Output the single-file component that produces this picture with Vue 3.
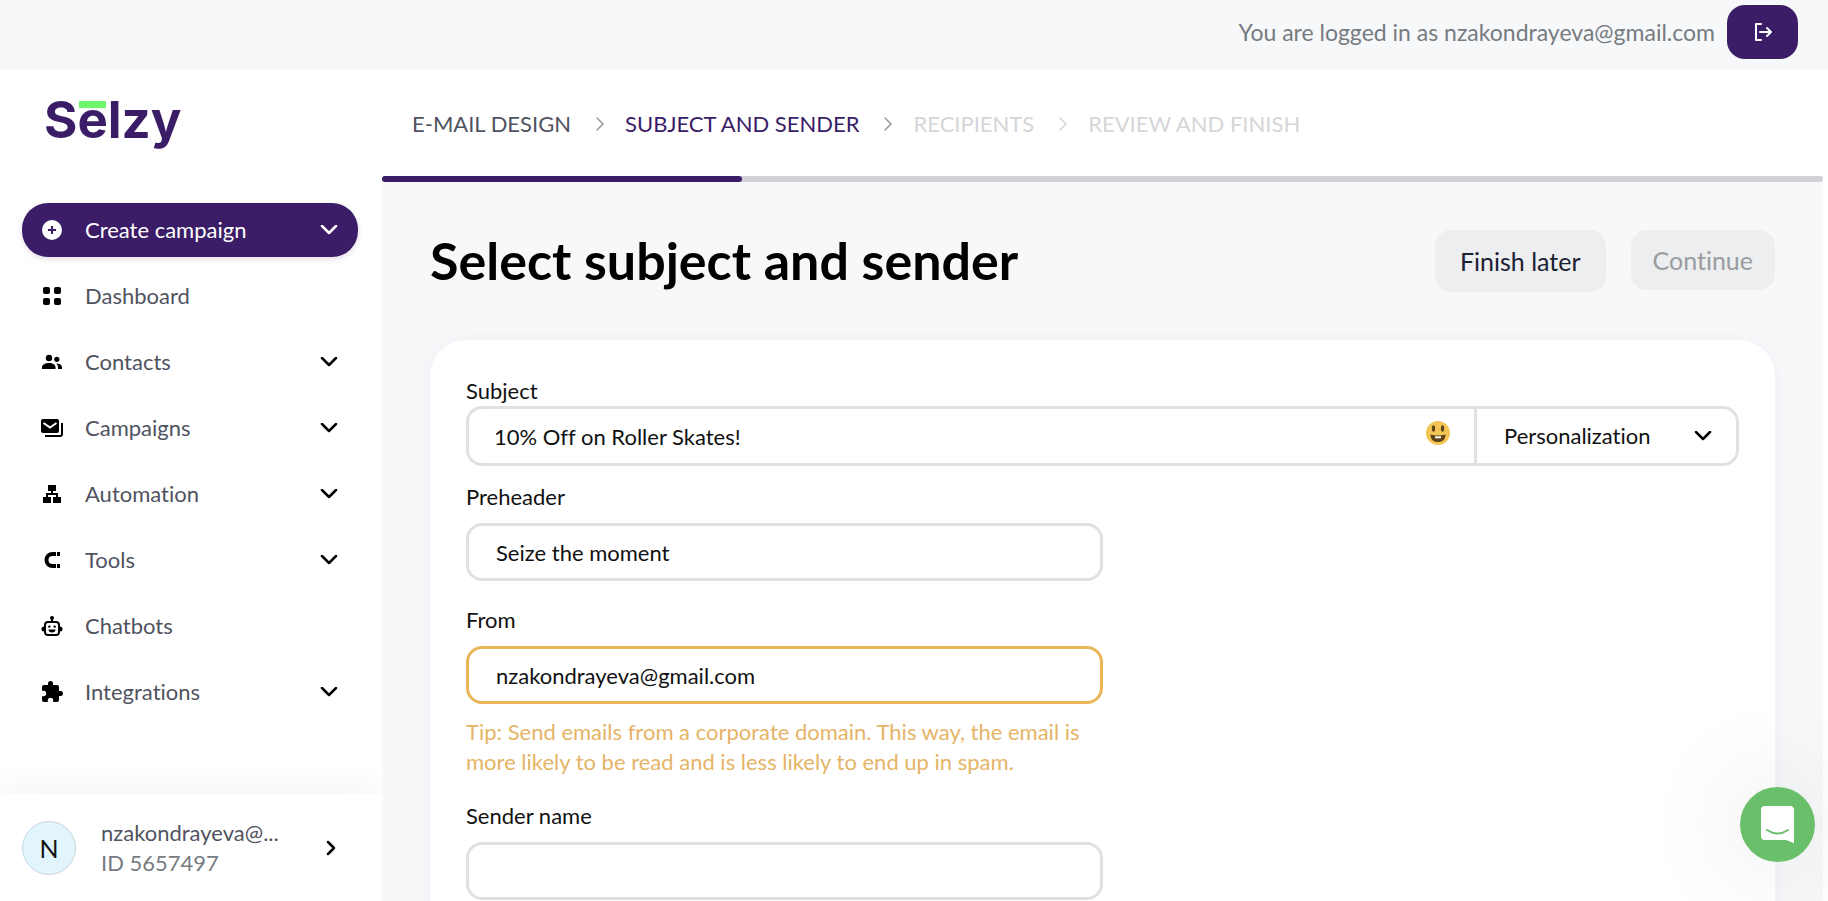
<template>
  <div class="page">
    <header class="topbar">
      <span>You are logged in as nzakondrayeva@gmail.com</span>
      <button type="button" class="logout" aria-label="Log out">
        <svg width="20" height="20" viewBox="0 0 20 20" fill="none" stroke="#fff" stroke-width="2" stroke-linecap="round" stroke-linejoin="round">
          <path d="M8 2H3v16h5M7 10h11M14 6l4 4-4 4" />
        </svg>
      </button>
    </header>

    <div class="body">
      <aside class="sidebar">
        <a href="#" class="logo">S<span class="logo-e">e</span>lzy</a>

        <nav class="nav">
          <button type="button" class="nav-item create">
            <svg class="icon" viewBox="0 0 24 24">
              <circle cx="12" cy="12" r="10" fill="#fff" />
              <path d="M12 8v8M8 12h8" stroke="#3a1d66" stroke-width="2" />
            </svg>
            <span>Create campaign</span>
            <svg class="chevron" viewBox="0 0 18 10"><path d="M2 1l7 7 7-7" /></svg>
          </button>
          <a v-for="item in menu" :key="item.name" href="#" class="nav-item">
            <svg class="icon" viewBox="0 0 24 24">
              <g v-if="item.icon === 'dashboard'">
                <rect x="3" y="3" width="7" height="7" rx="2" />
                <rect x="14" y="3" width="7" height="7" rx="2" />
                <rect x="3" y="14" width="7" height="7" rx="2" />
                <rect x="14" y="14" width="7" height="7" rx="2" />
              </g>
              <g v-else-if="item.icon === 'contacts'">
                <circle cx="9" cy="8" r="3.2" />
                <circle cx="16.8" cy="9.3" r="2.6" />
                <path d="M2 19v-1.5C2 14.600 5 13 9 13s6.500 1.600 6.500 4.500V19z" />
                <path d="M16 13.500c4 0 6 1.600 6 4V19h-4v-1.500c0-1.700-.700-3-2-4z" />
              </g>
              <g v-else-if="item.icon === 'campaigns'">
                <rect x="1" y="3" width="18" height="14" rx="2" />
                <path d="M3.500 7l6.500 4.500L16.500 7" fill="none" stroke="#fff" stroke-width="2" />
                <path d="M22 7v11a2 2 0 0 1-2 2H5" fill="none" stroke="#000" stroke-width="2" />
              </g>
              <g v-else-if="item.icon === 'automation'">
                <rect x="8" y="3" width="8" height="6" />
                <rect x="3" y="15" width="8" height="6" />
                <rect x="13" y="15" width="8" height="6" />
                <path d="M12 8v4M7 16v-4h10v4" fill="none" stroke="#000" stroke-width="2" />
              </g>
              <g v-else-if="item.icon === 'tools'" fill="none" stroke="#000" stroke-width="4">
                <path d="M16 6h-3.500a6 6 0 0 0 0 12H16M17 6h3M17 18h3" />
              </g>
              <g v-else-if="item.icon === 'chatbots'">
                <circle cx="12" cy="4" r="2" />
                <path d="M12 4v4" stroke="#000" stroke-width="2" />
                <rect x="5" y="8" width="14" height="13" rx="3" fill="none" stroke="#000" stroke-width="2" />
                <path d="M4 12.500a2.500 2.500 0 0 0 0 5zM20 12.500a2.500 2.500 0 0 1 0 5z" />
                <circle cx="9.300" cy="12.600" r="1.200" />
                <circle cx="14.700" cy="12.600" r="1.200" />
                <path d="M8.500 15.500h7a3.500 3 0 0 1-7 0z" />
              </g>
              <path
                v-else
                d="M20.500 11H19V7a2 2 0 0 0-2-2h-4V3.500a2.500 2.500 0 0 0-5 0V5H4a2 2 0 0 0-2 2v3.800h1.500a2.700 2.700 0 0 1 0 5.400H2V20a2 2 0 0 0 2 2h3.800v-1.500a2.700 2.700 0 0 1 5.400 0V22H17a2 2 0 0 0 2-2v-4h1.500a2.500 2.500 0 0 0 0-5z"
              />
            </svg>
            <span>{{ item.name }}</span>
            <svg v-if="item.children" class="chevron" viewBox="0 0 18 10"><path d="M2 1l7 7 7-7" /></svg>
          </a>
        </nav>

        <a href="#" class="account">
          <span class="avatar">N</span>
          <span class="account-info">
            <span class="account-mail">nzakondrayeva@...</span>
            <span class="account-id">ID 5657497</span>
          </span>
          <svg class="chevron-right" viewBox="0 0 10 16"><path d="M2 2l6 6-6 6" /></svg>
        </a>
      </aside>

      <main class="main">
        <ol class="steps">
          <li v-for="step in steps" :key="step.name" :class="step.state">
            <a href="#">{{ step.name }}</a>
            <svg class="step-arrow" viewBox="0 0 8 14"><path d="M1 1l6 6-6 6" /></svg>
          </li>
        </ol>
        <div class="progress">
          <div class="progress-done" :style="{ width: progress + '%' }"></div>
        </div>

        <div class="content">
          <div class="title-row">
            <h1>Select subject and sender</h1>
            <button type="button" class="btn btn-later">Finish later</button>
            <button type="button" class="btn btn-continue" disabled>Continue</button>
          </div>

          <form class="card" @submit.prevent>
            <label for="subject">Subject</label>
            <div class="subject-row">
              <input id="subject" v-model="form.subject" type="text" />
              <button type="button" class="emoji" aria-label="Insert emoji">
                <svg width="26" height="26" viewBox="0 0 26 26">
                  <circle cx="13" cy="13" r="12" fill="#f3c556" />
                  <ellipse cx="8.500" cy="8.500" rx="1.600" ry="3.200" fill="#5f4216" />
                  <ellipse cx="17.500" cy="8.500" rx="1.600" ry="3.200" fill="#5f4216" />
                  <path d="M5.500 14.500q7.500 2 15 0c0 5-3 7.500-7.500 7.500s-7.500-2.500-7.500-7.500z" fill="#5f4216" />
                  <path d="M10 16.300h6v2h-6z" fill="#fff" />
                </svg>
              </button>
              <div class="personalization">
                <select v-model="form.personalization" aria-label="Personalization">
                  <option>Personalization</option>
                </select>
                <svg class="chevron" viewBox="0 0 18 10"><path d="M2 1l7 7 7-7" /></svg>
              </div>
            </div>

            <div class="field preheader">
              <label for="preheader">Preheader</label>
              <input id="preheader" v-model="form.preheader" type="text" />
            </div>
            <div class="field">
              <label for="from">From</label>
              <input id="from" v-model="form.from" type="email" class="warning" />
              <p class="tip">
                Tip: Send emails from a corporate domain. This way, the email is more likely to be read and is less likely to end up in spam.
              </p>
            </div>
            <div class="field">
              <label for="sender">Sender name</label>
              <input id="sender" v-model="form.sender" type="text" />
            </div>
          </form>
        </div>
      </main>
    </div>

    <button type="button" class="chat" aria-label="Open chat">
      <svg width="34" height="38" viewBox="0 0 34 38">
        <path d="M4 0h25a4 4 0 0 1 4 4v33l-8-3H4a4 4 0 0 1-4-4V4a4 4 0 0 1 4-4z" fill="#fff" />
        <path d="M6 24q10.500 7 21 0" fill="none" stroke="#6abf6b" stroke-width="2" stroke-linecap="round" />
      </svg>
    </button>
  </div>
</template>

<script setup>
import { reactive } from 'vue'

const menu = [
  { name: 'Dashboard', icon: 'dashboard' },
  { name: 'Contacts', icon: 'contacts', children: true },
  { name: 'Campaigns', icon: 'campaigns', children: true },
  { name: 'Automation', icon: 'automation', children: true },
  { name: 'Tools', icon: 'tools', children: true },
  { name: 'Chatbots', icon: 'chatbots' },
  { name: 'Integrations', icon: 'integrations', children: true },
]

const steps = [
  { name: 'E-MAIL DESIGN', state: 'done' },
  { name: 'SUBJECT AND SENDER', state: 'active' },
  { name: 'RECIPIENTS', state: 'pending' },
  { name: 'REVIEW AND FINISH', state: 'pending' },
]

const progress = 25

const form = reactive({
  subject: '10% Off on Roller Skates!',
  personalization: 'Personalization',
  preheader: 'Seize the moment',
  from: 'nzakondrayeva@gmail.com',
  sender: '',
})
</script>

<style>
body { margin: 0; }
</style>

<style scoped>
.page {
  display: flex;
  flex-direction: column;
  height: 100vh;
  overflow: hidden;
  background: #fff;
  color: #111;
  font-family: Lato, "Noto Sans", sans-serif;
  font-size: 22px;
  font-variant-ligatures: none;
  line-height: 30px;
}
.page *, .page *::before { box-sizing: border-box; }
a { color: inherit; text-decoration: none; }
button, input, select { font: inherit; font-variant-ligatures: none; color: inherit; margin: 0; }
button { border: none; cursor: pointer; }

.topbar {
  display: flex;
  flex: none;
  align-items: center;
  justify-content: flex-end;
  gap: 12px;
  height: 70px;
  padding: 0 30px 6px 0;
  background: #f6f8fa;
  color: #777b80;
  font-size: 23px;
}
.logout {
  display: flex;
  align-items: center;
  justify-content: center;
  width: 71px;
  height: 54px;
  border-radius: 18px;
  background: #3a1d66;
}

.body { display: flex; flex: 1; min-height: 0; }

.sidebar {
  display: flex;
  flex: none;
  flex-direction: column;
  width: 382px;
  background: #fff;
}
.logo {
  align-self: flex-start;
  margin: 20px 0 0 44px;
  color: #3a1d66;
  font-family: Inter, sans-serif;
  font-size: 51px;
  font-weight: 700;
  line-height: 60px;
}
.logo-e { position: relative; }
.logo-e::before {
  content: '';
  position: absolute;
  top: 12px;
  left: 2px;
  width: 27px;
  height: 7px;
  background: #6df76a;
}
.nav {
  display: flex;
  flex: 1;
  flex-direction: column;
  gap: 12px;
  padding: 53px 24px 0 22px;
}
.nav-item {
  display: flex;
  align-items: center;
  height: 54px;
  padding: 0 20px 0 18px;
  color: #50535f;
}
.nav-item span { flex: 1; margin-left: 21px; text-align: left; }
.create {
  border-radius: 26px;
  background: #3a1d66;
  color: #fff;
  box-shadow: 0 2px 6px rgba(58, 29, 102, 0.15);
}
.icon { width: 24px; height: 24px; }
.chevron, .chevron-right, .step-arrow { fill: none; stroke: #000; stroke-width: 2.500; stroke-linecap: round; stroke-linejoin: round; }
.chevron { width: 18px; height: 10px; }
.chevron-right { width: 10px; height: 16px; }
.create .chevron { stroke: #fff; }

.account {
  display: flex;
  align-items: center;
  height: 107px;
  padding: 0 46px 0 22px;
  box-shadow: 0 -10px 30px rgba(0, 0, 0, 0.04);
  clip-path: inset(-50px 0 0 0);
}
.avatar {
  width: 54px;
  height: 54px;
  border: 1px solid #c9d6de;
  border-radius: 50%;
  background: #e2f4fc;
  color: #111;
  font-size: 25px;
  line-height: 52px;
  text-align: center;
}
.account-info {
  display: flex;
  flex: 1;
  flex-direction: column;
  margin-left: 25px;
}
.account-mail { color: #50535f; }
.account-id { color: #777b80; }

.main {
  flex: 1;
  min-width: 0;
  margin-right: 5px;
  background: #f6f8fa;
}
.steps {
  display: flex;
  align-items: center;
  height: 106px;
  margin: 0;
  padding: 1px 0 0 30px;
  background: #fff;
  list-style: none;
}
.steps li { display: flex; align-items: center; }
.steps .done { color: #50535f; }
.steps .active { color: #3a1d66; }
.steps .pending { color: #d5d6d8; }
.step-arrow { width: 8px; height: 14px; margin: 0 21px 0 25px; stroke: #999; stroke-width: 1.500; }
.pending .step-arrow { stroke: #d5d6d8; }
.steps li:last-child .step-arrow { display: none; }
.progress { height: 6px; border-radius: 3px; background: #cfd1d5; }
.progress-done { height: 6px; border-radius: 3px; background: #3a1d66; }

.content { padding: 48px 48px 0; }
.title-row { display: flex; align-items: flex-start; height: 110px; }
h1 {
  flex: 1;
  margin: 0;
  color: #000;
  font-size: 52px;
  font-weight: 700;
  line-height: 60px;
}
.btn {
  height: 60px;
  padding: 0 22px;
  border-radius: 16px;
  background: #eceeef;
  font-size: 25px;
}
.btn-later { height: 62px; padding: 0 25px; color: #1b2033; }
.btn-continue { margin-left: 25px; color: #9a9ca0; cursor: default; }

.card {
  height: 100vh;
  padding: 36px;
  border-radius: 36px;
  background: #fff;
  box-shadow: 0 0 18px rgba(30, 50, 70, 0.04);
}
label { display: block; }
input {
  display: block;
  width: 100%;
  height: 58px;
  padding: 0 27px;
  border: 3px solid #e1e1e1;
  border-radius: 16px;
  background: #fff;
  outline: none;
}
.subject-row {
  display: flex;
  align-items: center;
  height: 60px;
  border: 3px solid #e1e1e1;
  border-radius: 16px;
}
.subject-row input { flex: 1; min-width: 0; height: 54px; padding: 0 25px; border: none; }
.emoji { display: flex; padding: 0 23px 6px 0; background: none; }
.personalization {
  display: flex;
  align-items: center;
  width: 262px;
  height: 54px;
  padding-right: 24px;
  border-left: 3px solid #e1e1e1;
}
.personalization select {
  flex: 1;
  height: 54px;
  padding: 0 0 0 27px;
  border: none;
  background: none;
  outline: none;
  appearance: none;
}
.field { width: 50%; max-width: 637px; margin-bottom: 24px; }
.preheader { margin-top: 16px; }
.field label { margin-bottom: 11px; }
.field .warning { border-color: #e9b657; }
.tip { margin: 13px 0 0; color: #e5b467; }

.chat {
  position: fixed;
  right: 13px;
  bottom: 39px;
  display: flex;
  align-items: center;
  justify-content: center;
  width: 75px;
  height: 75px;
  padding: 0;
  border-radius: 50%;
  background: #6abf6b;
  box-shadow: 0 0 100px 20px rgba(0, 0, 0, 0.06);
}
</style>
